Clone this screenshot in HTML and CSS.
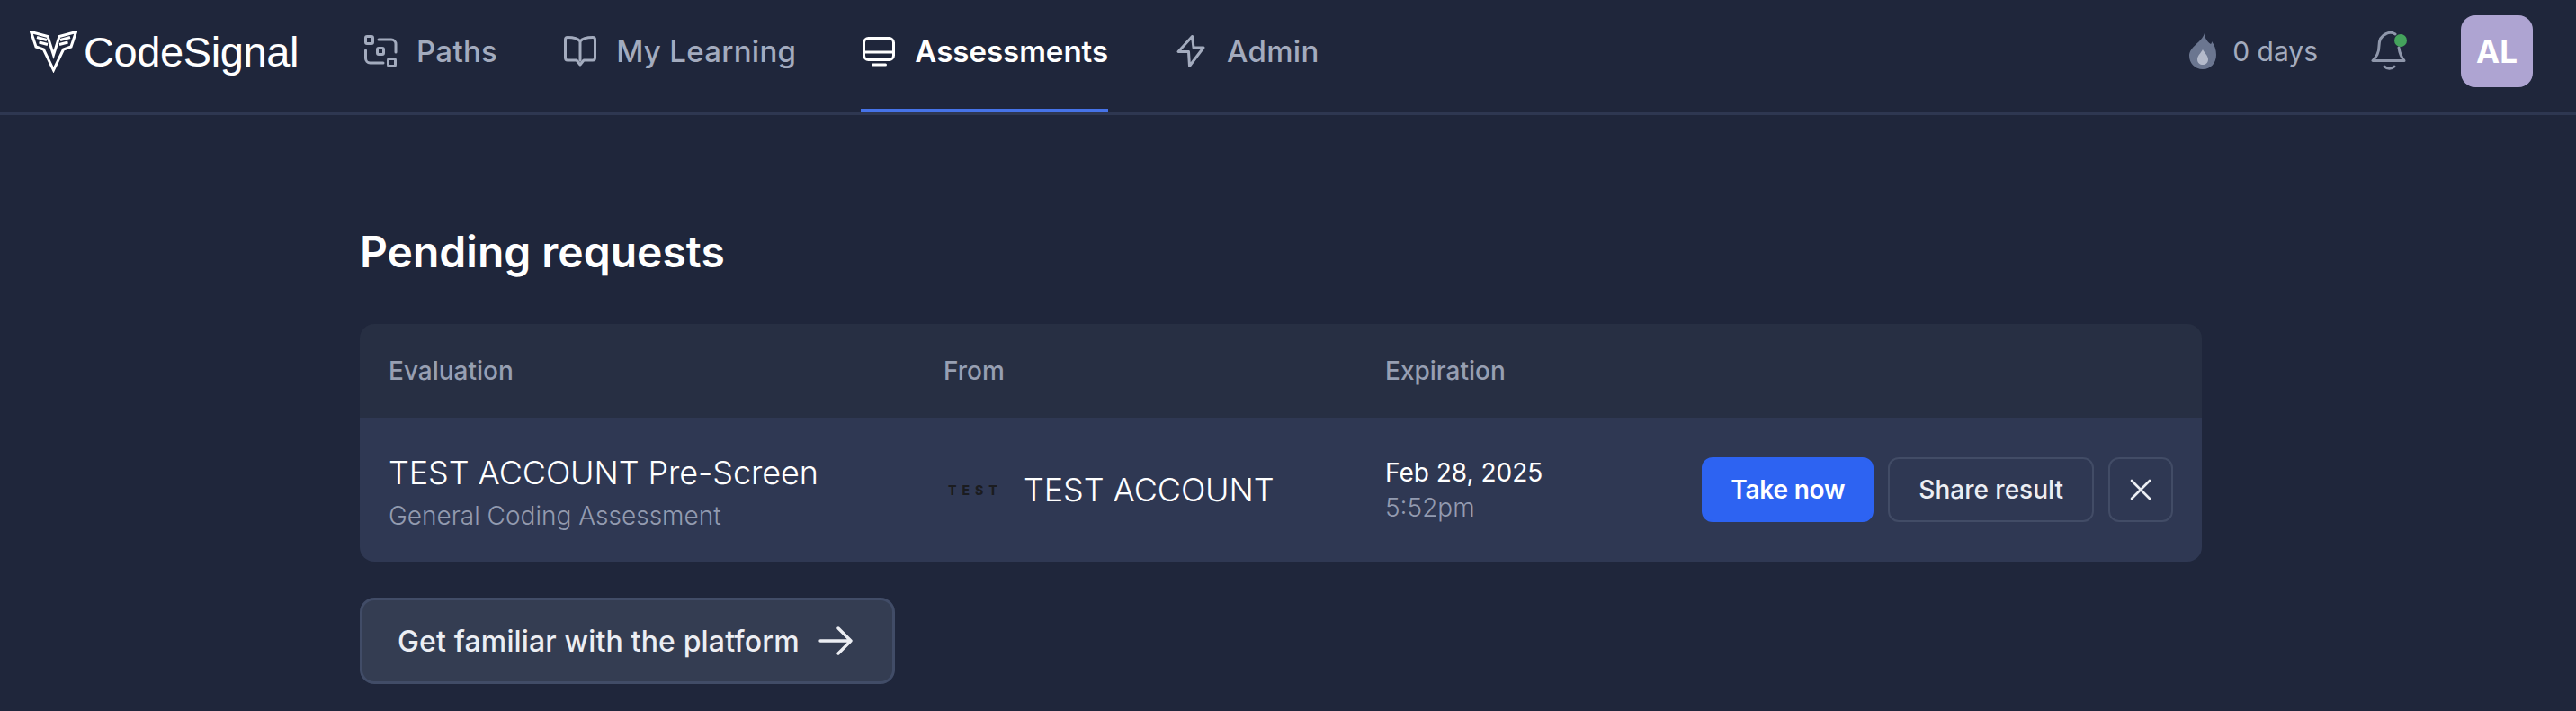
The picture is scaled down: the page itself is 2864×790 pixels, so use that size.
FILE: index.html
```html
<!DOCTYPE html>
<html lang="en">
<head>
    <meta charset="UTF-8">
    <title>CodeSignal - Assessments</title>
    <link rel="stylesheet" href="styles.css">
</head>
<body>
    <header class="topbar">
        <a class="logo" href="#">
            <svg class="logo-mark" viewBox="0 0 53 47" fill="none" stroke="#fff" stroke-width="3" stroke-linejoin="miter">
                <path d="M1.5 1.5 L20 6.5 L26.5 27 L33 6.5 L51.5 1.5 L46 18 L37.5 21 L26.5 44 L15.5 21 L7 18 Z"/>
                <path d="M8 7.5 L19 10.5 M10.5 13 L20 15.5"/>
                <path d="M45 7.5 L34 10.5 M42.5 13 L33 15.5"/>
            </svg>
            <span class="logo-text">CodeSignal</span>
        </a>
        <nav class="nav">
            <a class="nav-item" href="#">
                <svg class="nav-icon" viewBox="0 0 40 40" fill="none" stroke="currentColor" stroke-width="3" stroke-linecap="round" stroke-linejoin="round">
                    <rect x="3.5" y="3.5" width="8" height="8" rx="1.5"/>
                    <rect x="16.5" y="16.5" width="7" height="7" rx="1.5"/>
                    <rect x="28.5" y="28.5" width="8" height="8" rx="1.5"/>
                    <path d="M18 7 H32 A5 5 0 0 1 37 12 V21"/>
                    <path d="M3.5 19 V28 A5 5 0 0 0 8.5 33 H23"/>
                </svg>
                <span>Paths</span>
            </a>
            <a class="nav-item" href="#">
                <svg class="nav-icon" viewBox="0 0 40 40" fill="none" stroke="currentColor" stroke-width="3" stroke-linecap="round" stroke-linejoin="round">
                    <path d="M20 9 C17 5 12 4.5 6 4.5 C4.5 4.5 3.5 5.5 3.5 7 V27 C3.5 29 4.5 30 6 30 H16 L20 35 L24 30 H34 C35.5 30 36.5 29 36.5 27 V7 C36.5 5.5 35.5 4.5 34 4.5 C28 4.5 23 5 20 9 V30"/>
                </svg>
                <span>My Learning</span>
            </a>
            <a class="nav-item active" href="#">
                <svg class="nav-icon" viewBox="0 0 40 40" fill="none" stroke="currentColor" stroke-width="3" stroke-linecap="round" stroke-linejoin="round">
                    <rect x="3.5" y="5.5" width="33" height="24" rx="5"/>
                    <path d="M4 21 H36"/>
                    <path d="M13.5 35 H27.5"/>
                </svg>
                <span>Assessments</span>
            </a>
            <a class="nav-item" href="#">
                <svg class="nav-icon" viewBox="0 0 40 40" fill="none" stroke="currentColor" stroke-width="3" stroke-linecap="round" stroke-linejoin="round">
                    <path d="M21.5 3.5 L6 20.5 H17.5 L18.5 36.5 L34 16 H23 Z"/>
                </svg>
                <span>Admin</span>
            </a>
        </nav>
        <div class="topbar-right">
            <div class="streak">
                <svg class="flame" viewBox="0 0 30 40">
                    <path d="M17 0 C17 6 21 10 24 12 C25 11 25 10 25 9 C28 13 30 18 30 24 C30 33 24 40 15 40 C6 40 0 33 0 25 C0 15 14 10 17 0 Z" fill="#6b7690"/>
                    <path d="M15 18 C17 22 21 25 21 29 C21 33 18 35 15 35 C12 35 9 33 9 29 C9 25 13 22 15 18 Z" fill="#b4bacb"/>
                </svg>
                <span>0 days</span>
            </div>
            <div class="bell">
                <svg viewBox="0 0 40 44" fill="none" stroke="#8f97ab" stroke-width="3" stroke-linecap="round" stroke-linejoin="round">
                    <path d="M27 3 C24 1 20 1 17 2.5 C11 5 9 10 9 16 C9 24 6 28 2 32.5 H37 C34 29 32 25 31 18"/>
                    <path d="M15 39 C18 42 23 42 26 39"/>
                </svg>
                <span class="bell-dot"></span>
            </div>
            <div class="avatar">AL</div>
        </div>
    </header>

    <main class="content">
        <h1>Pending requests</h1>
        <section class="requests">
            <div class="requests-row requests-head">
                <div>Evaluation</div>
                <div>From</div>
                <div>Expiration</div>
            </div>
            <div class="requests-row requests-item">
                <div class="eval">
                    <div class="eval-name">TEST ACCOUNT Pre-Screen</div>
                    <div class="muted eval-type">General Coding Assessment</div>
                </div>
                <div class="company">
                    <span class="company-logo">TEST</span>
                    <span class="company-name">TEST ACCOUNT</span>
                </div>
                <div>
                    <div class="exp-date">Feb 28, 2025</div>
                    <div class="muted">5:52pm</div>
                </div>
                <div class="actions">
                    <button class="btn btn-primary">Take now</button>
                    <button class="btn">Share result</button>
                    <button class="btn btn-icon" aria-label="Dismiss">
                        <svg viewBox="0 0 28 28" fill="none" stroke="currentColor" stroke-width="2.6" stroke-linecap="round">
                            <path d="M4 4 L24 24 M24 4 L4 24"/>
                        </svg>
                    </button>
                </div>
            </div>
        </section>
        <button class="btn-tour">
            Get familiar with the platform
            <svg viewBox="0 0 38 32" fill="none" stroke="currentColor" stroke-width="3.4" stroke-linecap="round" stroke-linejoin="round">
                <path d="M2 16 H36 M22 2 L36 16 L22 30"/>
            </svg>
        </button>
    </main>
</body>
</html>
```

FILE: styles.css
```css
* {
    margin: 0;
    padding: 0;
    box-sizing: border-box;
}
html, body {
    height: 100%;
    overflow: hidden;
}
body {
    background-color: #1f263b;
    font-family: Inter, "Liberation Sans", sans-serif;
    color: #fff;
}
a {
    text-decoration: none;
    color: inherit;
}
.topbar {
    height: 128px;
    display: flex;
    align-items: stretch;
    gap: 72px;
    padding-left: 33px;
    padding-right: 48px;
    border-bottom: 3px solid #2e3751;
}
.logo {
    display: flex;
    align-items: center;
    gap: 7px;
    padding-bottom: 11px;
    margin-right: -1px;
}
.logo-mark {
    width: 53px;
    height: 47px;
}
.logo-text {
    font-family: "Liberation Sans", Arial, sans-serif;
    font-size: 47px;
    letter-spacing: -0.4px;
}
.nav {
    display: flex;
    gap: 72px;
}
.nav-item {
    display: flex;
    align-items: center;
    gap: 20px;
    padding-top: 4px;
    padding-bottom: 11px;
    font-size: 33px;
    font-weight: 500;
    letter-spacing: 0.3px;
    color: #a3abbe;
    border-bottom: 4px solid transparent;
}
.nav-item.active {
    color: #fff;
    font-weight: 600;
    letter-spacing: 0;
    border-bottom-color: #4673e8;
}
.nav-icon {
    width: 40px;
    height: 40px;
}
.topbar-right {
    margin-left: auto;
    display: flex;
    align-items: center;
    padding-bottom: 11px;
}
.streak {
    display: flex;
    align-items: center;
    gap: 18px;
    font-size: 30px;
    color: #a3abbe;
}
.flame {
    width: 30px;
    height: 40px;
}
.bell {
    position: relative;
    width: 40px;
    height: 44px;
    margin-left: 59px;
}
.bell svg {
    width: 40px;
    height: 44px;
}
.bell-dot {
    position: absolute;
    top: 3px;
    right: 0;
    width: 14px;
    height: 14px;
    border-radius: 50%;
    background: #44a35c;
}
.avatar {
    width: 80px;
    height: 80px;
    margin-left: 60px;
    border-radius: 16px;
    background: #aea4d2;
    display: flex;
    align-items: center;
    justify-content: center;
    font-size: 35px;
    font-weight: 700;
}
.content {
    width: 2048px;
    margin-left: 400px;
    padding-top: 123px;
}
h1 {
    font-size: 48px;
    line-height: 58px;
    font-weight: 600;
    margin-bottom: 51px;
}
.requests {
    border-radius: 16px;
    overflow: hidden;
}
.requests-row {
    display: grid;
    grid-template-columns: 617px 491px 1fr auto;
    align-items: center;
    padding: 0 32px;
}
.requests-head {
    height: 104px;
    background: #272f43;
    font-size: 28px;
    font-weight: 500;
    color: #979fb2;
}
.requests-item {
    height: 160px;
    background: #2f3853;
}
.eval {
    padding-top: 7px;
}
.eval-name {
    font-size: 36px;
    font-weight: 300;
    line-height: 44px;
    letter-spacing: -0.1px;
}
.eval-type {
    margin-top: 7px;
}
.muted {
    font-size: 28px;
    font-weight: 300;
    line-height: 38px;
    color: #939bb0;
}
.company {
    display: flex;
    align-items: center;
}
.company-logo {
    width: 89px;
    padding-left: 5px;
    font-size: 14px;
    font-weight: 800;
    letter-spacing: 6px;
    color: #1b1c20;
}
.company-name {
    font-size: 36px;
    font-weight: 300;
    letter-spacing: -0.1px;
}
.exp-date {
    font-size: 28px;
    font-weight: 400;
    line-height: 40px;
}
.actions {
    display: flex;
    gap: 16px;
}
.btn {
    height: 72px;
    padding: 0 32px;
    border: 2px solid #424c66;
    border-radius: 12px;
    background: transparent;
    color: #eceef3;
    font-family: inherit;
    font-size: 28px;
    font-weight: 500;
}
.btn-primary {
    padding: 0 30px;
    background: #2d63f2;
    border-color: #2d63f2;
    color: #fff;
    font-weight: 600;
    letter-spacing: -0.2px;
}
.btn-icon {
    width: 72px;
    padding: 0;
    display: flex;
    align-items: center;
    justify-content: center;
}
.btn-icon svg {
    width: 28px;
    height: 28px;
}
.btn-tour {
    margin-top: 40px;
    height: 96px;
    padding: 0 44px 0 39px;
    display: flex;
    align-items: center;
    gap: 21px;
    border: 3px solid #414c67;
    border-radius: 16px;
    background: #343d52;
    color: #eceef3;
    font-family: inherit;
    font-size: 32px;
    font-weight: 500;
    letter-spacing: 0.15px;
}
.btn-tour svg {
    width: 38px;
    height: 32px;
}
```
